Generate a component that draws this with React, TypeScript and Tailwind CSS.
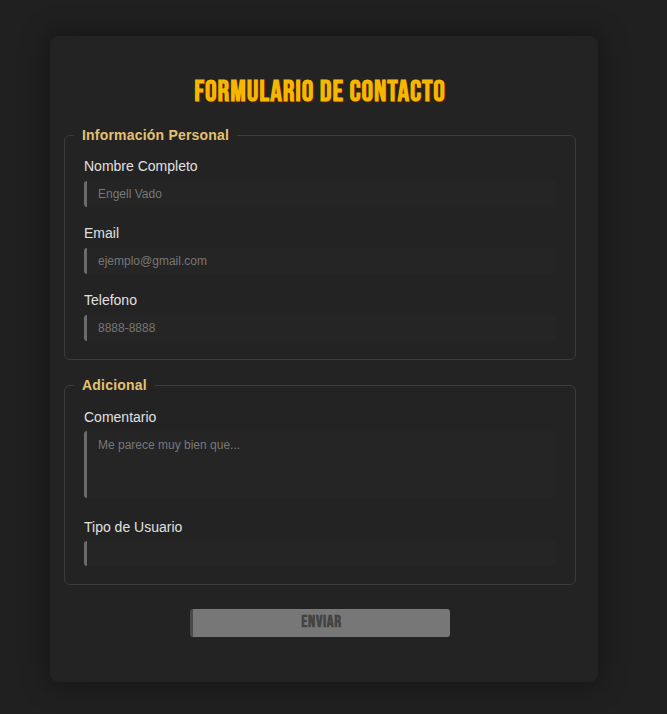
import React from "react";

const sans = "font-['Liberation_Sans',Arial,sans-serif]";
const narrow = "font-['Bebas_Neue','Liberation_Sans_Narrow','DejaVu_Sans_Condensed',sans-serif]";

function Field({ label, placeholder }: { label: string; placeholder?: string }) {
  return (
    <div className="mb-[17px]">
      <label className="block text-[14px] leading-[18px] text-[#e0e0e0] mb-[6px]">{label}</label>
      <input
        placeholder={placeholder}
        className="block w-full h-[26px] bg-[#252525] border-0 border-l-[3px] border-[#6b6b6b] rounded-[3px] pl-[11px] text-[12px] text-[#ccc] placeholder:text-[#777] outline-none"
      />
    </div>
  );
}

export default function App() {
  return (
    <div className={`min-h-[714px] bg-[#202020] pt-[36px] pb-[32px] ${sans}`}>
      <div className="ml-[50px] w-[548px] h-[646px] bg-[#232323] rounded-[8px] shadow-[0_0_30px_rgba(0,0,0,0.45)] pl-[14px] pt-[40px]">
        <div className="w-[512px]">
          <div className="text-center h-[34px]">
            <h1
              className={`inline-block ${narrow} font-bold text-[29px] leading-[34px] tracking-[0.9px] text-[#f5b700] [text-shadow:1px_1px_0_#5a1c10] whitespace-nowrap`}
            >
              FORMULARIO DE CONTACTO
            </h1>
          </div>

          <fieldset className="mt-[15px] border border-[#3c3c3c] rounded-[6px] px-[19px] pt-[11px] pb-px">
            <legend className="ml-[-10px] px-[8px] text-[14px] font-bold tracking-[0.2px] text-[#e3c173]">Información Personal</legend>
            <Field label="Nombre Completo" placeholder="Engell Vado" />
            <Field label="Email" placeholder="ejemplo@gmail.com" />
            <Field label="Telefono" placeholder="8888-8888" />
          </fieldset>

          <fieldset className="mt-[15px] border border-[#3c3c3c] rounded-[6px] px-[19px] pt-[12px] pb-px">
            <legend className="ml-[-10px] px-[8px] text-[14px] font-bold tracking-[0.2px] text-[#e3c173]">Adicional</legend>
            <div className="mb-[20px]">
              <label className="block text-[14px] leading-[18px] text-[#e0e0e0] mb-[5px]">Comentario</label>
              <textarea
                placeholder="Me parece muy bien que..."
                className="block w-full h-[67px] resize-none bg-[#252525] border-0 border-l-[3px] border-[#6b6b6b] rounded-[3px] pl-[11px] pt-[5px] text-[12px] text-[#ccc] placeholder:text-[#777] outline-none"
              />
            </div>
            <div className="mb-[17px]">
              <label className="block text-[14px] leading-[18px] text-[#e0e0e0] mb-[5px]">Tipo de Usuario</label>
              <select className="block w-full h-[25px] appearance-none bg-[#252525] border-0 border-l-[3px] border-[#6b6b6b] rounded-[3px] pl-[11px] text-[12px] text-[#ccc] outline-none" />
            </div>
          </fieldset>

          <div className="flex justify-center mt-[24px]">
            <button className="w-[260px] h-[28px] bg-[#777] border-l-[3px] border-[#4a4a4a] rounded-[3px] flex items-center justify-center">
              <span className={`${narrow} font-bold text-[17px] tracking-[0.6px] text-[#444]`}>ENVIAR</span>
            </button>
          </div>
        </div>
      </div>
    </div>
  );
}
